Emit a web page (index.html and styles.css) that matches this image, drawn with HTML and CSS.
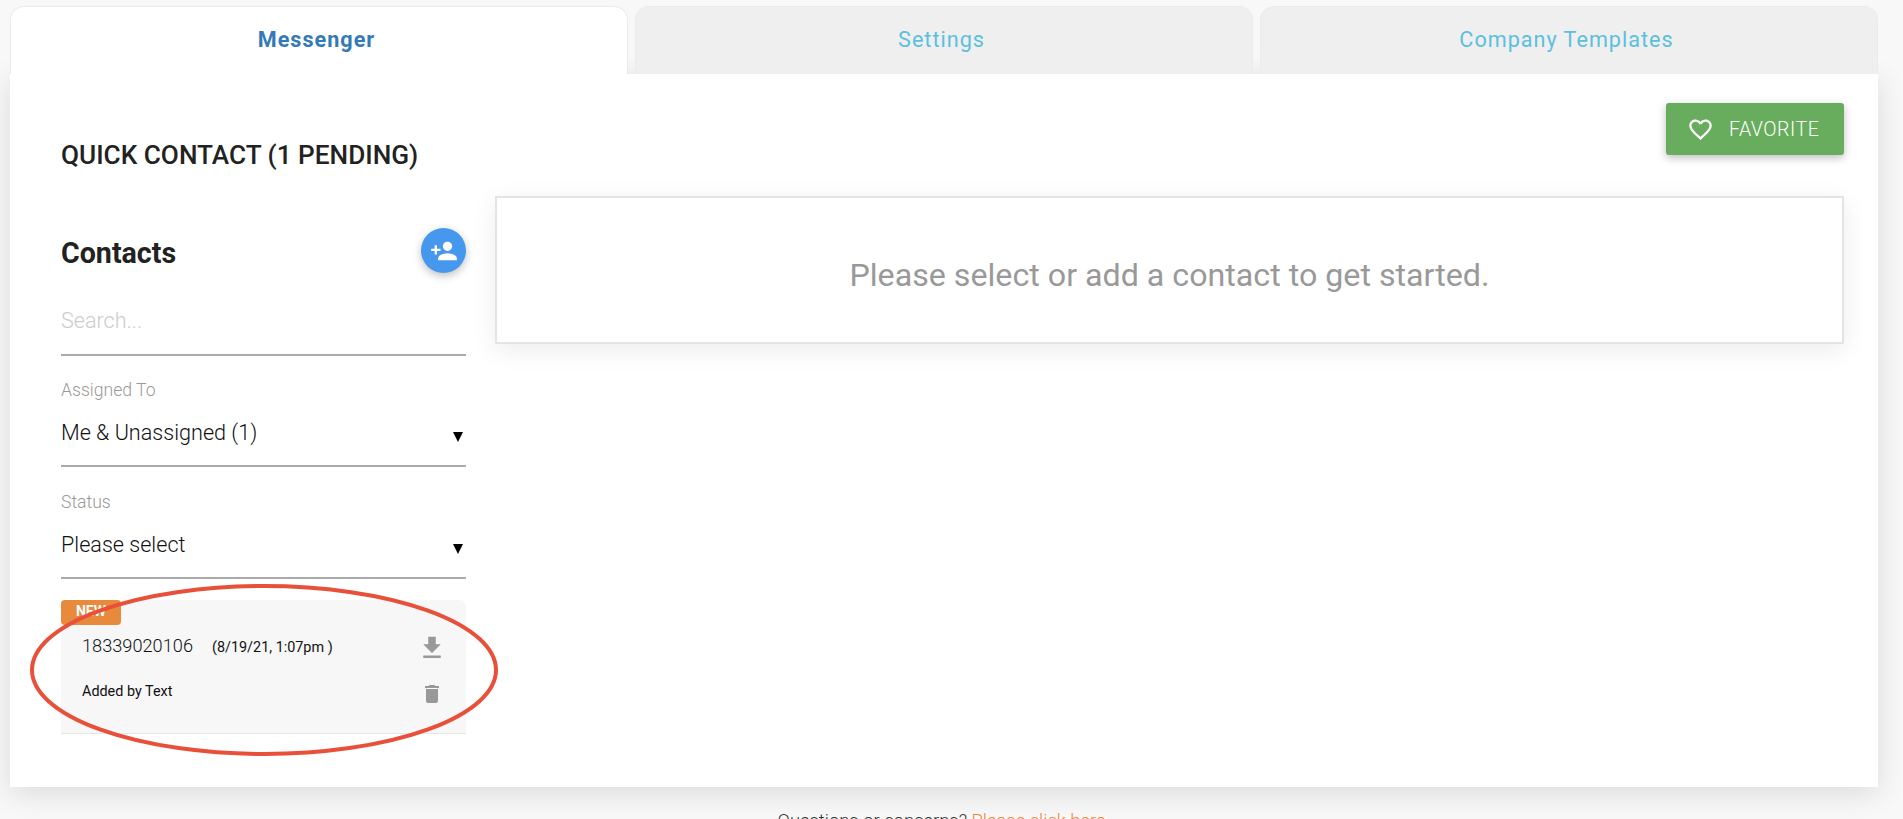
FILE: index.html
```html
<!DOCTYPE html>
<html>
<head>
    <title>Messenger</title>
    <link rel="stylesheet" href="styles.css">
</head>
<body>
    <div class="tabs">
        <div class="tab active">Messenger</div>
        <div class="tab">Settings</div>
        <div class="tab">Company Templates</div>
    </div>
    <div class="panel">
        <div class="sidebar">
            <h1>QUICK CONTACT (1 PENDING)</h1>
            <div class="contacts-head">
                <h2>Contacts</h2>
                <div class="fab">
                    <svg viewBox="0 0 24 24" width="28" height="28"><path d="M15 12c2.21 0 4-1.79 4-4s-1.79-4-4-4-4 1.79-4 4 1.79 4 4 4zm-9-2V7H4v3H1v2h3v3h2v-3h3v-2H6zm9 4c-2.67 0-8 1.34-8 4v2h16v-2c0-2.66-5.33-4-8-4z"/></svg>
                </div>
            </div>
            <div class="search">Search...</div>
            <div class="label">Assigned To</div>
            <div class="select"><span>Me &amp; Unassigned (1)</span><i class="arrow"></i></div>
            <div class="label">Status</div>
            <div class="select"><span>Please select</span><i class="arrow"></i></div>
            <div class="card">
                <div class="badge">NEW</div>
                <div class="card-row first">
                    <div><span class="phone">18339020106</span><span class="date">(8/19/21, 1:07pm )</span></div>
                    <div class="icon-cell">
                        <svg class="download" viewBox="0 0 24 24" width="30" height="30"><path d="M19 9h-4V3H9v6H5l7 7 7-7zM5 18v2h14v-2H5z"/></svg>
                    </div>
                </div>
                <div class="card-row">
                    <div class="added">Added by Text</div>
                    <div class="icon-cell">
                        <svg viewBox="0 0 24 24" width="24" height="24"><path d="M6 19c0 1.1.9 2 2 2h8c1.1 0 2-.9 2-2V7H6v12zM19 4h-3.5l-1-1h-5l-1 1H5v2h14V4z"/></svg>
                    </div>
                </div>
            </div>
        </div>
        <div class="main">
            <div class="actions">
                <div class="btn-favorite">
                    <svg viewBox="0 0 24 24" width="27" height="27"><path d="M16.5 3c-1.74 0-3.41.81-4.5 2.09C10.91 3.81 9.24 3 7.5 3 4.42 3 2 5.42 2 8.5c0 3.78 3.4 6.86 8.55 11.54L12 21.35l1.45-1.32C18.6 15.36 22 12.28 22 8.5 22 5.42 19.58 3 16.5 3zm-4.4 15.55l-.1.1-.1-.1C7.14 14.24 4 11.39 4 8.5 4 6.5 5.5 5 7.5 5c1.54 0 3.04.99 3.57 2.36h1.87C13.46 5.99 14.96 5 16.5 5c2 0 3.5 1.5 3.5 3.5 0 2.89-3.14 5.74-7.9 10.05z"/></svg>
                    <span>FAVORITE</span>
                </div>
            </div>
            <div class="empty">Please select or add a contact to get started.</div>
        </div>
    </div>
    <div class="footer">Questions or concerns? <a href="#">Please click here</a></div>

    <svg class="circle" viewBox="0 0 480 180" width="480" height="180">
        <ellipse cx="240" cy="90" rx="232" ry="84"/>
    </svg>
</body>
</html>
```

FILE: styles.css
```css
html, body {
    height: 819px;
    overflow: hidden;
}
body {
    margin: 0;
    padding: 6px 25px 0 10px;
    box-sizing: border-box;
    background-color: #f8f8f8;
    font-family: Roboto, "Liberation Sans", sans-serif;
    color: #222;
}
.tabs {
    display: flex;
    gap: 7px;
}
.tab {
    flex: 1;
    height: 68px;
    padding: 21px 5px 0 0;
    box-sizing: border-box;
    text-align: center;
    font-size: 21.6px;
    font-weight: 400;
    line-height: 24px;
    letter-spacing: 1px;
    color: #5bc0de;
    background-color: #efefef;
    border: 1px solid #ebebeb;
    border-bottom: none;
    border-radius: 14px 14px 0 0;
}
.tab.active {
    font-weight: 700;
    color: #337ab7;
    background-color: #fff;
}
.panel {
    display: flex;
    gap: 29px;
    height: 713px;
    padding: 29px 34px 0 51px;
    box-sizing: border-box;
    background-color: #fff;
    box-shadow: 0 6px 28px rgba(0, 0, 0, 0.12);
}
.sidebar {
    position: relative;
    width: 405px;
    flex: none;
}
h1 {
    margin: 37px 0 0;
    font-size: 26.2px;
    font-weight: 500;
    line-height: 30px;
}
.contacts-head {
    display: flex;
    justify-content: space-between;
    align-items: center;
    margin-top: 58px;
}
h2 {
    margin: 5px 0 0;
    font-size: 28.6px;
    font-weight: 700;
    line-height: 34px;
}
.fab {
    display: flex;
    justify-content: center;
    align-items: center;
    width: 45px;
    height: 45px;
    border-radius: 50%;
    background-color: #4698ee;
    box-shadow: 0 3px 8px rgba(0, 0, 0, 0.25);
}
.fab svg {
    fill: #fff;
}
.search {
    margin-top: 36px;
    padding-bottom: 21px;
    font-size: 21.6px;
    font-weight: 300;
    line-height: 24px;
    color: #ccc;
    border-bottom: 2px solid #aaa;
}
.label {
    margin-top: 24px;
    font-size: 17.6px;
    font-weight: 300;
    line-height: 20px;
    color: #999;
}
.select + .label {
    margin-top: 25px;
}
.select {
    display: flex;
    justify-content: space-between;
    align-items: center;
    margin-top: 21px;
    padding: 0 3px 20px 0;
    font-size: 21.6px;
    font-weight: 300;
    line-height: 24px;
    color: #111;
    border-bottom: 2px solid #aaa;
}
.arrow {
    margin-top: 8px;
    border-left: 5px solid transparent;
    border-right: 5px solid transparent;
    border-top: 10px solid #000;
}
.card {
    position: relative;
    height: 134px;
    margin-top: 21px;
    padding: 30px 19px 0 21px;
    box-sizing: border-box;
    background-color: #f7f7f7;
    border-bottom: 1px solid #e6e6e6;
    border-radius: 6px 6px 0 0;
}
.badge {
    position: absolute;
    top: 0;
    left: 0;
    width: 60px;
    height: 25px;
    font-size: 14px;
    font-weight: 700;
    line-height: 23px;
    text-align: center;
    color: #fff;
    background-color: #e88a3c;
    border-radius: 4px;
}
.card-row {
    display: flex;
    justify-content: space-between;
    align-items: center;
}
.card-row.first {
    margin-bottom: 22px;
}
.phone {
    font-size: 18.2px;
    font-weight: 300;
    color: #111;
}
.date {
    margin-left: 19px;
    font-size: 14.4px;
    color: #111;
}
.added {
    margin-top: -5px;
    font-size: 14.4px;
    color: #111;
}
.icon-cell {
    display: flex;
    justify-content: center;
    width: 30px;
}
.icon-cell svg {
    fill: #999;
}
.icon-cell .download {
    margin: 3px 0 -3px;
}
.main {
    flex: 1;
}
.actions {
    display: flex;
    justify-content: flex-end;
}
.btn-favorite {
    display: flex;
    align-items: center;
    width: 178px;
    height: 52px;
    padding-left: 21px;
    box-sizing: border-box;
    font-size: 19.6px;
    font-weight: 300;
    letter-spacing: 0.5px;
    color: #fff;
    background-color: #68ad5e;
    border-radius: 3px;
    box-shadow: 0 3px 8px rgba(0, 0, 0, 0.25);
}
.btn-favorite svg {
    fill: #fff;
    margin-right: 15px;
}
.empty {
    margin-top: 41px;
    height: 148px;
    box-sizing: border-box;
    border: 2px solid #e4e4e4;
    text-align: center;
    font-size: 32.2px;
    line-height: 154px;
    color: #999;
    background-color: #fff;
    box-shadow: 0 6px 24px rgba(0, 0, 0, 0.08);
}
.footer {
    margin-top: 22px;
    padding-right: 5px;
    text-align: center;
    font-size: 18.4px;
    font-weight: 300;
    line-height: 24px;
    color: #333;
}
.footer a {
    color: #e88a3c;
    text-decoration: none;
}
.circle {
    position: absolute;
    left: 24px;
    top: 580px;
    pointer-events: none;
}
.circle ellipse {
    fill: none;
    stroke: #e8503a;
    stroke-width: 4;
}
```
